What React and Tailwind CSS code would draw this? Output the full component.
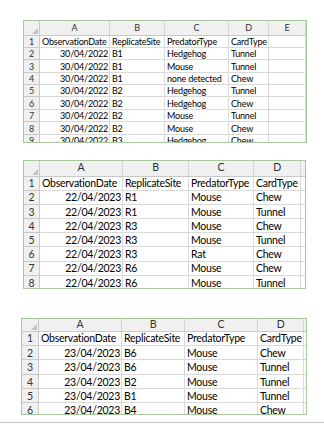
import React from 'react';

const font = { fontFamily: 'Lato, "Liberation Sans", sans-serif' };

// three cropped spreadsheet snapshots, each with its own zoom level
const sheets = [
  {
    frame: 'mt-[20px] ml-[23px] w-[284px] h-[123px] text-[9px] tracking-[-0.2px]',
    headH: 'h-[14.5px]',
    rowH: 'h-[12.4px]',
    widths: ['w-[16px]', 'w-[70px]', 'w-[55px]', 'w-[64px]', 'w-[40px]', 'w-[37px]'],
    letters: ['A', 'B', 'C', 'D', 'E'],
    rows: [
      ['ObservationDate', 'ReplicateSite', 'PredatorType', 'CardType', ''],
      ['30/04/2022', 'B1', 'Hedgehog', 'Tunnel', ''],
      ['30/04/2022', 'B1', 'Mouse', 'Tunnel', ''],
      ['30/04/2022', 'B1', 'none detected', 'Chew', ''],
      ['30/04/2022', 'B2', 'Hedgehog', 'Tunnel', ''],
      ['30/04/2022', 'B2', 'Hedgehog', 'Chew', ''],
      ['30/04/2022', 'B2', 'Mouse', 'Tunnel', ''],
      ['30/04/2022', 'B2', 'Mouse', 'Chew', ''],
      ['30/04/2022', 'B3', 'Hedgehog', 'Chew', ''],
    ],
  },
  {
    frame: 'mt-[17px] ml-[23px] w-[283px] h-[129px] text-[10.5px] tracking-[-0.25px]',
    headH: 'h-[15.5px]',
    rowH: 'h-[14.2px]',
    widths: ['w-[16px]', 'w-[83px]', 'w-[66px]', 'w-[65px]', 'w-[47px]', 'w-[10px]'],
    letters: ['A', 'B', 'C', 'D', ''],
    rows: [
      ['ObservationDate', 'ReplicateSite', 'PredatorType', 'CardType', ''],
      ['22/04/2023', 'R1', 'Mouse', 'Chew', ''],
      ['22/04/2023', 'R1', 'Mouse', 'Tunnel', ''],
      ['22/04/2023', 'R3', 'Mouse', 'Chew', ''],
      ['22/04/2023', 'R3', 'Mouse', 'Tunnel', ''],
      ['22/04/2023', 'R3', 'Rat', 'Chew', ''],
      ['22/04/2023', 'R6', 'Mouse', 'Chew', ''],
      ['22/04/2023', 'R6', 'Mouse', 'Tunnel', ''],
    ],
  },
  {
    frame: 'mt-[29px] ml-[21px] w-[286px] h-[97px] text-[10.5px] tracking-[-0.25px]',
    headH: 'h-[12.5px]',
    rowH: 'h-[14.4px]',
    widths: ['w-[17px]', 'w-[83px]', 'w-[63px]', 'w-[73px]', 'w-[46px]', 'w-[10px]'],
    letters: ['A', 'B', 'C', 'D', ''],
    rows: [
      ['ObservationDate', 'ReplicateSite', 'PredatorType', 'CardType', ''],
      ['23/04/2023', 'B6', 'Mouse', 'Chew', ''],
      ['23/04/2023', 'B6', 'Mouse', 'Tunnel', ''],
      ['23/04/2023', 'B2', 'Mouse', 'Tunnel', ''],
      ['23/04/2023', 'B1', 'Mouse', 'Tunnel', ''],
      ['23/04/2023', 'B4', 'Mouse', 'Chew', ''],
    ],
  },
];

function Sheet({ s }) {
  return (
    <div className={`${s.frame} shrink-0 overflow-hidden border border-[#a9c79f] bg-white text-black`}>
      {/* column letters */}
      <div className={`flex ${s.headH} shrink-0 bg-[#f0f0f0] border-b border-[#c9c9c9] text-[#333]`}>
        <div className={`${s.widths[0]} relative shrink-0 border-r border-[#c9c9c9]`}>
          <div className="absolute right-[1px] bottom-[1px] w-0 h-0 border-l-[6px] border-l-transparent border-b-[6px] border-b-[#c4c4c4]" />
        </div>
        {s.letters.map((l, i) => (
          <div
            key={i}
            className={`${s.widths[i + 1]} shrink-0 flex items-center justify-center border-r border-[#d4d4d4]`}
          >
            {l}
          </div>
        ))}
      </div>

      {s.rows.map((r, ri) => (
        <div key={ri} className={`flex ${s.rowH} shrink-0`}>
          <div
            className={`${s.widths[0]} shrink-0 flex items-end justify-center bg-[#f0f0f0] border-r border-b border-[#c9c9c9] text-[#333] leading-none pb-[1px]`}
          >
            {ri + 1}
          </div>
          {r.map((c, ci) => (
            <div
              key={ci}
              className={`${s.widths[ci + 1]} shrink-0 flex items-end whitespace-nowrap overflow-hidden leading-none pb-[1px] border-r border-b border-[#dadada] ${
                ci === 0 && ri > 0 ? 'justify-end pr-[1px]' : 'pl-[2px]'
              }`}
            >
              {c}
            </div>
          ))}
        </div>
      ))}
    </div>
  );
}

export default function App() {
  return (
    <div className="w-[324px] h-[424px] bg-white flex flex-col overflow-hidden" style={font}>
      {sheets.map((s, i) => (
        <Sheet key={i} s={s} />
      ))}
      <div className="mt-auto mb-[1px] h-[1px] bg-[#c8c8c8]" />
    </div>
  );
}
